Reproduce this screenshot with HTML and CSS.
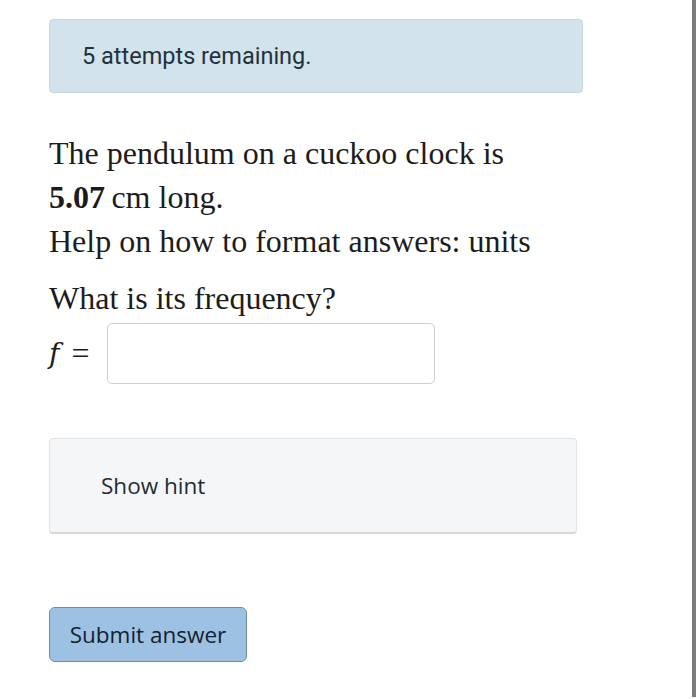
FILE: index.html
```html
<!DOCTYPE html>
<html>
 <head>
     <title>Question</title>
     <link rel="stylesheet" href="styles.css">
     <meta charset="UTF-8">
 </head>
 <body>
  <div class="page">
    <div class="alert">5 attempts remaining.</div>

    <div class="question">
      <p class="stem">The pendulum on a cuckoo clock is<br>
        <span class="qty">5.07</span>&thinsp;cm long.<br>
        Help on how to format answers: units</p>
      <p class="ask">What is its frequency?</p>
      <div class="answer_row">
        <span class="var"><i class="f_sym">f</i><span class="eq">=</span></span>
        <input class="answer_box" type="text">
      </div>
    </div>

    <div class="hint">Show hint</div>

    <button class="btn_submit">Submit answer</button>
  </div>
 </body>
</html>
```

FILE: styles.css
```css
body {margin:0; background:#fff;}
.page {width:696px; height:697px; border-right:4px solid #7b7b7b; padding:19px 0 0 49px; box-sizing:border-box;}
.alert {width:534px; height:74px; box-sizing:border-box; padding:0 32px; display:flex; align-items:center; background:#d3e3eb; border:1px solid #c6d7df; border-radius:4px; color:#1e323c; font-family:Roboto, sans-serif; font-size:23.5px;}
.question {font-family:"Liberation Serif", serif; font-size:32px; color:#1c1c1c;}
.stem {margin:38px 0 0; line-height:44px;}
.qty {font-weight:bold;}
.ask {margin:13px 0 0; line-height:44px;}
.answer_row {display:flex; align-items:center; gap:18px; margin-top:3px;}
.var {font-size:32px; display:flex; align-items:center;}
.f_sym {font-family:"DejaVu Serif", serif; font-size:28px;}
.eq {margin-left:12px;}
.answer_box {width:328px; height:61px; box-sizing:border-box; border:1px solid #cfcfcf; border-radius:5px; background:#fff;}
.hint {width:528px; height:96px; box-sizing:border-box; margin-top:54px; padding:0 51px; display:flex; align-items:center; background:#f5f6f7; border:1px solid #e1e3e4; border-bottom:2px solid #d6d8d9; border-radius:4px; font-family:"Open Sans", sans-serif; font-size:22.5px; color:#1f2d33;}
.btn_submit {display:block; margin-top:73px; width:198px; height:55px; background:#9dc1e2; border:1px solid #6e8ca3; border-radius:6px; font-family:"Open Sans", sans-serif; font-size:22.5px; color:#15212e; padding:0;}
```
